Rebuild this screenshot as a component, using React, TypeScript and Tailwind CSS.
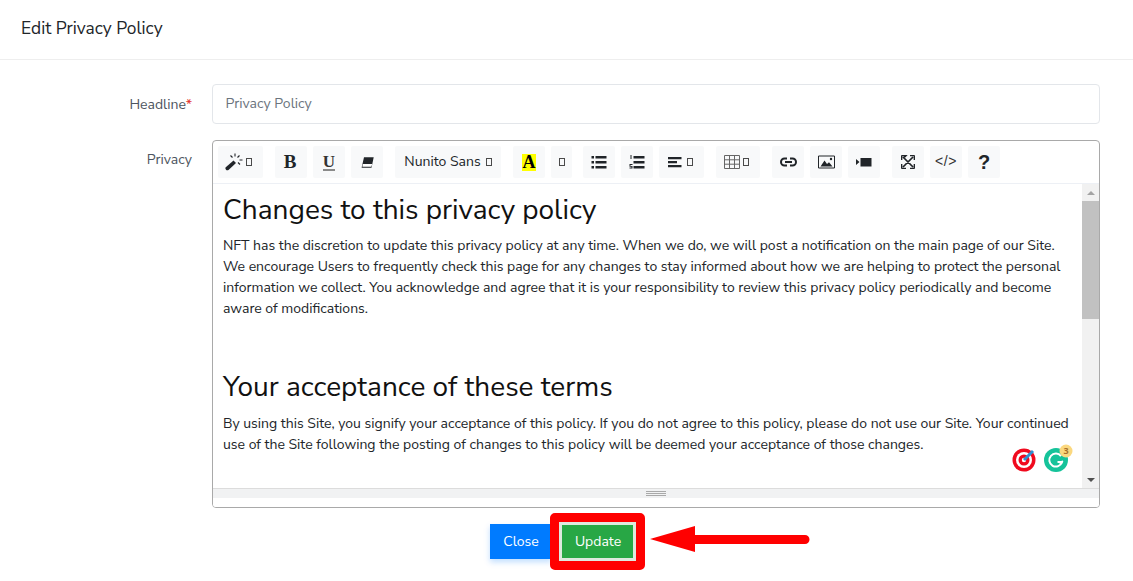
import React from "react";

const Tofu = ({ className = "" }: { className?: string }) => (
  <span className={"inline-block w-[6px] h-[8px] border border-[#4a4a4a] " + className} />
);

const Btn = ({ w, children, className = "" }: { w: string; children: React.ReactNode; className?: string }) => (
  <div className={"h-8 flex items-center justify-center bg-[#f8f9fa] text-[#212529] rounded-[2px] shrink-0 " + w + " " + className}>{children}</div>
);

const Icon = ({ children, w = 16, h = 16 }: { children: React.ReactNode; w?: number; h?: number }) => (
  <svg width={w} height={h} viewBox={`0 0 ${w} ${h}`} fill="currentColor">{children}</svg>
);

function Toolbar() {
  return (
    <div className="h-[43px] border-b border-[#edf0f5] flex items-start pt-[5px] pl-[5px] gap-[12px]">
      <Btn w="w-[45px]" className="gap-[3px] pr-[4px]">
        <Icon w={18} h={18}>
          <path d="M0.5 14.5 L8.5 7.5 L11 10 L3.5 17 Q2 17.8 1 16.8 Q0 15.5 0.5 14.5Z" />
          <path d="M10 0.5v3M14.5 2.5l-2 2M17.5 7h-3M15 11.5l-2-2M5.5 2.5l2 2" stroke="currentColor" strokeWidth="1.1" fill="none" />
        </Icon>
        <Tofu />
      </Btn>
      <div className="flex gap-[6px]">
        <Btn w="w-8"><span className="font-['Liberation_Serif',serif] font-bold text-[19px] leading-none -ml-[2px] -mt-[1px]">B</span></Btn>
        <Btn w="w-8">
          <span className="font-['Liberation_Serif',serif] font-bold text-[17px] leading-[15px] text-[#333] border-b-2 border-[#8a8a8a] mt-[1px]">U</span>
        </Btn>
        <Btn w="w-8">
          <Icon w={13} h={11}>
            <path d="M3 0.3H12.7L10.5 10.7H0.6Z" fill="#212529" />
            <path d="M1.8 7H11.2L10.3 9.8H1.4Z" fill="#fff" />
          </Icon>
        </Btn>
      </div>
      <Btn w="w-[106px]" className="gap-[5px] text-[14px] text-[#33383d]">
        <span className="-mt-[2px]">Nunito Sans</span><Tofu />
      </Btn>
      <div className="flex gap-[6px]">
        <Btn w="w-8">
          <span className="w-[14px] h-[17px] bg-[#ffff00] flex items-center justify-center font-['Liberation_Serif',serif] font-bold text-[18px] leading-none text-black">A</span>
        </Btn>
        <Btn w="w-[21px]"><Tofu /></Btn>
      </div>
      <div className="flex gap-[6px] -ml-[1px]">
        <Btn w="w-8">
          <Icon>
            <path d="M0.5 2h2.5v2.5H0.5zM0.5 7h2.5v2.5H0.5zM0.5 12h2.5v2.5H0.5zM4.5 2h11v2.5H4.5zM4.5 7h11v2.5H4.5zM4.5 12h11v2.5H4.5z" />
          </Icon>
        </Btn>
        <Btn w="w-8">
          <Icon>
            <path d="M4.5 2h11v2.5H4.5zM4.5 7h11v2.5H4.5zM4.5 12h11v2.5H4.5z" />
            <path d="M1.5 1h1v4h-1zM.5 10h3v1h-2v1h2v2.5h-3v-1h2v-.8h-2z" />
          </Icon>
        </Btn>
        <Btn w="w-[45px]" className="gap-[5px] pr-[2px]">
          <Icon w={14} h={12}>
            <path d="M0 1h13.5v2.2H0zM0 5h9v2.2H0zM0 9h13.5v2.2H0z" />
          </Icon>
          <Tofu />
        </Btn>
      </div>
      <Btn w="w-[44px]" className="gap-[3px] pr-[3px]">
        <Icon>
          <path d="M.5 1.5h15v13H.5zM5.5 1.5v13M10.5 1.5v13M.5 5.8h15M.5 10.2h15" fill="none" stroke="#666" strokeWidth="1" />
        </Icon>
        <Tofu />
      </Btn>
      <div className="flex gap-[6px]">
        <Btn w="w-8">
          <Icon w={17} h={12}>
            <path d="M7 2.5H4.5a3.5 3.5 0 0 0 0 7H7M10 2.5h2.5a3.5 3.5 0 0 1 0 7H10M5 6h7" fill="none" stroke="currentColor" strokeWidth="2" />
          </Icon>
        </Btn>
        <Btn w="w-8">
          <Icon w={17} h={14}>
            <path d="M.5 1h16v12H.5z" fill="none" stroke="currentColor" strokeWidth="1" />
            <path d="M2.5 11.5L6.5 5.5L9 9l2-1.8 3.5 4.3z" />
            <circle cx="13" cy="4" r="1.2" />
          </Icon>
        </Btn>
        <Btn w="w-8">
          <Icon w={16} h={10}>
            <path d="M0 2L3.5 5L0 8zM4.5 1H15.5V9.5H4.5z" />
          </Icon>
        </Btn>
      </div>
      <div className="flex gap-[6px]">
        <Btn w="w-8">
          <Icon w={14} h={14}>
            <path d="M0.5 0.5h4.5L3.4 2.1 M0.5 0.5v4.5 M2 2l10 10 M13.5 13.5H9M13.5 13.5V9 M13.5 0.5H9M13.5 0.5V5 M12 2L2 12 M0.5 13.5H5M0.5 13.5V9" fill="none" stroke="currentColor" strokeWidth="1.7" />
          </Icon>
        </Btn>
        <Btn w="w-8"><span className="font-['Liberation_Sans',sans-serif] text-[14px] text-[#333] tracking-[0.6px] -mt-[1px]">&lt;/&gt;</span></Btn>
        <Btn w="w-8"><span className="font-['Liberation_Sans',sans-serif] font-bold text-[20px] leading-none text-[#212529]">?</span></Btn>
      </div>
    </div>
  );
}

function Scrollbar() {
  return (
    <div className="w-[17px] shrink-0 bg-[#f1f1f1] flex flex-col items-center">
      <div className="h-[17px] flex items-center justify-center shrink-0">
        <div className="w-0 h-0 border-x-[4px] border-x-transparent border-b-[4px] border-b-[#a3a3a3]" />
      </div>
      <div className="w-full h-[118px] bg-[#c1c1c1] shrink-0" />
      <div className="flex-1" />
      <div className="h-[17px] flex items-center justify-center shrink-0">
        <div className="w-0 h-0 border-x-[4px] border-x-transparent border-t-[4px] border-t-[#505050]" />
      </div>
    </div>
  );
}

function Grammarly() {
  return (
    <div className="absolute left-[799px] top-[307px] flex gap-[8px]">
      <svg width="24" height="24" viewBox="0 0 24 24">
        <circle cx="12" cy="12" r="11.5" fill="#f00a1e" />
        <circle cx="12" cy="12" r="8" fill="#fff" />
        <circle cx="12" cy="12" r="5.5" fill="#f00a1e" />
        <circle cx="12" cy="12" r="2.2" fill="#fff" />
        <path d="M12 12L21 3" stroke="#2f8fd0" strokeWidth="3" />
      </svg>
      <svg width="24" height="24" viewBox="0 0 24 24" className="overflow-visible">
        <circle cx="12" cy="12" r="12" fill="#15c39a" />
        <path d="M17 8.2A6.5 6.5 0 1 0 18 14H13.5" fill="none" stroke="#fff" strokeWidth="2" />
        <path d="M18.5 15.5l-3.5 0 3.5-3.5z" fill="#fff" />
        <circle cx="22" cy="3" r="6.5" fill="#fbd87f" />
        <text x="22" y="6" textAnchor="middle" fontSize="9" fontWeight="700" fill="#a9712a" fontFamily="'Open Sans', sans-serif">3</text>
      </svg>
    </div>
  );
}

export default function App() {
  return (
    <div className="w-[1133px] h-[581px] bg-white overflow-hidden font-['Nunito_Sans','Open_Sans',sans-serif] text-[#212529]">
      <div className="h-[60px] border-b border-[#eeeeee] pl-[21px] flex items-center">
        <h1 className="text-[17.35px] text-[#212529] pb-[3px]">Edit Privacy Policy</h1>
      </div>
      <div className="pt-[24px] pr-[33px] flex flex-col">
        <div className="flex items-center gap-[20px]">
          <label className="w-[192px] text-right text-[14px] text-[#4d5560]">
            Headline<span className="text-[#e3342f]">*</span>
          </label>
          <div className="flex-1 h-10 border border-[#e3e6ea] rounded-[4px] flex items-center pl-[12.5px] pb-[2px] text-[14px] text-[#6b747d]">
            Privacy Policy
          </div>
        </div>
        <div className="flex gap-[20px] mt-[16px]">
          <label className="w-[192px] text-right text-[14px] text-[#4d5560] pt-[9px]">Privacy</label>
          <div className="flex-1 h-[368px] border border-[#a9a9a9] rounded-[4px] flex flex-col overflow-hidden relative">
            <Toolbar />
            <div className="h-[304px] flex overflow-hidden">
              <div className="flex-1 pl-[10px] pr-[11px] text-[14px] leading-[21px] text-[#212529] overflow-hidden">
                <h2 className="text-[28px] leading-[34px] mt-[9px] text-[#111]">Changes to this privacy policy</h2>
                <p className="mt-[8px]">
                  NFT has the discretion to update this privacy policy at any time. When we do, we will post a notification on the main page of our Site. We encourage Users to frequently check this page for any changes to stay informed about how we are helping to protect the personal information we collect. You acknowledge and agree that it is your responsibility to review this privacy policy periodically and become aware of modifications.
                </p>
                <h2 className="text-[28px] leading-[34px] mt-[51px] text-[#111]">Your acceptance of these terms</h2>
                <p className="mt-[9px]">
                  By using this Site, you signify your acceptance of this policy. If you do not agree to this policy, please do not use our Site. Your continued use of the Site following the posting of changes to this policy will be deemed your acceptance of those changes.
                </p>
              </div>
              <Scrollbar />
            </div>
            <Grammarly />
            <div className="h-[10px] bg-[#f1f2f3] border-t border-[#dcdcdc] flex flex-col items-center justify-center gap-[1px]">
              <div className="w-[20px] h-px bg-[#a9a9a9]" />
              <div className="w-[20px] h-px bg-[#a9a9a9]" />
              <div className="w-[20px] h-px bg-[#a9a9a9]" />
            </div>
            <div className="flex-1 bg-white" />
          </div>
        </div>
        <div className="flex mt-[16px] pl-[490px]">
          <div className="w-[62px] h-[35px] bg-[#007bff] text-white text-[14px] flex items-center justify-center pb-[1px] shadow-[0_3px_6px_rgba(0,123,255,0.25)]">Close</div>
          <div className="relative ml-[10px] -mt-[1px] w-[73px] h-[36px] bg-[#28a745] text-white text-[14px] flex items-center justify-center pr-[1px]">
            Update
            <div className="absolute -left-[12px] -top-[10px] w-[95px] h-[57px] border-[9px] border-[#ff0000] rounded-[5px] outline outline-[3px] -outline-offset-[12px] outline-[#dfe9df]" />
            <svg className="absolute left-[88px] top-[2px]" width="160" height="30" viewBox="0 0 160 30">
              <path d="M0 14L45 1V10H155a4.5 4.5 0 0 1 0 9H45V27Z" fill="#ff0000" />
            </svg>
          </div>
        </div>
      </div>
    </div>
  );
}
